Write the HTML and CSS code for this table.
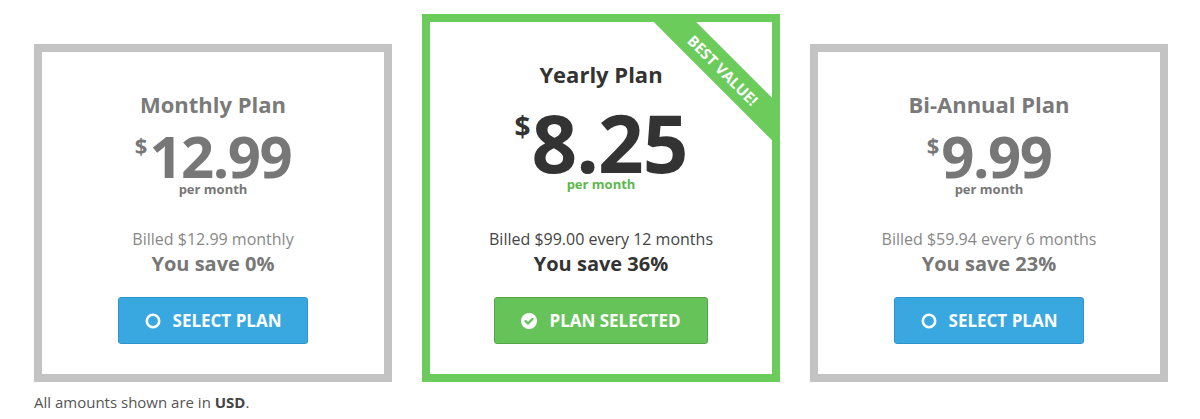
FILE: index.html
```html
<!DOCTYPE html>
<html lang="en">
<head>
<meta charset="utf-8">
<title>Plans</title>
<link rel="stylesheet" href="styles.css">
</head>
<body>
<div class="page">
  <div class="plans">
    <div class="card">
      <h3 class="title">Monthly Plan</h3>
      <div class="price"><span class="cur">$</span><span class="amount">12.99</span></div>
      <div class="per">per month</div>
      <div class="billed">Billed $12.99 monthly</div>
      <div class="save">You save 0%</div>
      <button class="btn btn-blue"><svg class="ico" width="16" height="16" viewBox="0 0 16 16"><circle cx="8" cy="8" r="6.2" fill="none" stroke="#fff" stroke-width="2.6"/></svg><span>SELECT PLAN</span></button>
    </div>
    <div class="card card-featured">
      <div class="ribbon">BEST VALUE!</div>
      <h3 class="title">Yearly Plan</h3>
      <div class="price"><span class="cur">$</span><span class="amount">8.25</span></div>
      <div class="per">per month</div>
      <div class="billed">Billed $99.00 every 12 months</div>
      <div class="save">You save 36%</div>
      <button class="btn btn-green"><svg class="ico" width="16" height="16" viewBox="0 0 16 16"><circle cx="8" cy="8" r="8" fill="#fff"/><path d="M4.6 8.2 L7 10.5 L11.4 6" fill="none" stroke="#66c359" stroke-width="2.4" stroke-linecap="round" stroke-linejoin="round"/></svg><span>PLAN SELECTED</span></button>
    </div>
    <div class="card">
      <h3 class="title">Bi-Annual Plan</h3>
      <div class="price"><span class="cur">$</span><span class="amount">9.99</span></div>
      <div class="per">per month</div>
      <div class="billed">Billed $59.94 every 6 months</div>
      <div class="save">You save 23%</div>
      <button class="btn btn-blue"><svg class="ico" width="16" height="16" viewBox="0 0 16 16"><circle cx="8" cy="8" r="6.2" fill="none" stroke="#fff" stroke-width="2.6"/></svg><span>SELECT PLAN</span></button>
    </div>
  </div>
  <p class="note">All amounts shown are in <strong>USD</strong>.</p>
</div>
</body>
</html>
```
FILE: styles.css
```css
* { box-sizing: border-box; }
html, body { margin: 0; padding: 0; background: #fff; }
body { font-family: "Open Sans", "Liberation Sans", sans-serif; color: #555; }

.page { padding: 14px 0 0 34px; }

.plans {
  display: flex;
  align-items: flex-end;
  gap: 30px;
}

.card {
  position: relative;
  overflow: hidden;
  width: 358px;
  border: 8px solid #c3c3c3;
  background: #fff;
  text-align: center;
  padding: 39px 0 30px;
  display: flex;
  flex-direction: column;
  align-items: center;
  color: #777;
}

.title {
  margin: 0;
  font-size: 22px;
  line-height: 26px;
  font-weight: 700;
  color: #7a7a7a;
}

.price {
  display: flex;
  align-items: flex-start;
  justify-content: center;
  margin-top: 15px;
  height: 48px;
}
.cur {
  font-size: 22px;
  line-height: 22px;
  font-weight: 700;
  margin-top: 2px;
  margin-right: 2px;
}
.amount {
  font-size: 58px;
  line-height: 48px;
  font-weight: 700;
  letter-spacing: -1.5px;
}

.per {
  margin-top: 1px;
  font-size: 13px;
  line-height: 16px;
  font-weight: 700;
}

.billed {
  margin-top: 30px;
  font-size: 16px;
  line-height: 24px;
  color: #888;
}

.save {
  font-size: 20px;
  line-height: 26px;
  font-weight: 700;
  color: #777;
}

.btn {
  margin-top: 20px;
  height: 47px;
  padding: 0 26px;
  display: flex;
  align-items: center;
  gap: 12px;
  border-radius: 3px;
  font-family: inherit;
  font-size: 17px;
  font-weight: 700;
  color: #fff;
  cursor: pointer;
}
.btn .ico { flex: none; }
.btn-blue { background: #39a8e0; border: 1px solid #2f94c9; }
.btn-green { background: #66c359; border: 1px solid #52a646; }

/* featured */
.card-featured {
  border-color: #6bcb5b;
  color: #333;
}
.card-featured .title { color: #333; }
.card-featured .price { margin-top: 22px; height: 66px; }
.card-featured .cur { font-size: 28px; line-height: 28px; margin-top: 3px; margin-right: 1px; }
.card-featured .amount { font-size: 80px; line-height: 66px; letter-spacing: -1px; }
.card-featured .per { color: #5cb84d; margin-top: 1px; }
.card-featured .billed { color: #444; margin-top: 35px; }
.card-featured .save { color: #333; }

.ribbon {
  position: absolute;
  left: 193px;
  top: 33px;
  width: 200px;
  height: 30px;
  line-height: 30px;
  background: #6bcb5b;
  color: #fff;
  font-size: 15px;
  font-weight: 700;
  text-align: center;
  transform: rotate(45deg);
}

.note {
  margin: 10px 0 0;
  font-size: 15px;
  line-height: 20px;
  color: #555;
}
.note strong { font-weight: 700; color: #444; }
```
